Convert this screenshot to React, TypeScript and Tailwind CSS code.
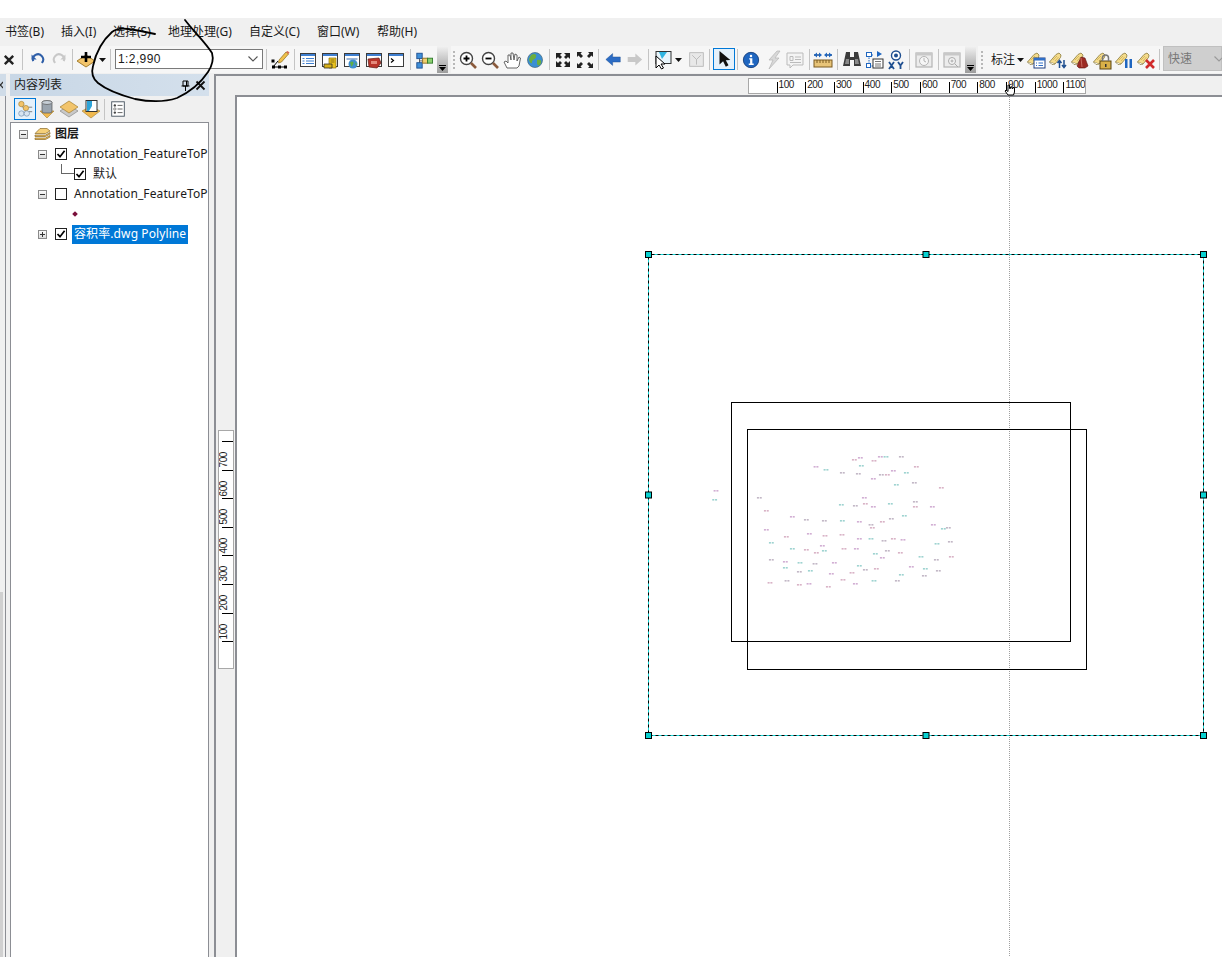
import type { ReactNode } from 'react';

const menus = [
  { label: '书签(B)', w: 'w-[56px]' },
  { label: '插入(I)', w: 'w-[52px]' },
  { label: '选择(S)', w: 'w-[55px]' },
  { label: '地理处理(G)', w: 'w-[81px]' },
  { label: '自定义(C)', w: 'w-[68px]' },
  { label: '窗口(W)', w: 'w-[60px]' },
  { label: '帮助(H)', w: 'w-[60px]' },
];

// label marks of the map, read off the picture
const marks = [
  [48,153],[44,180],[178,174],[199,213],[199,270],[214,309],[214,360],[210,429],[256,366],[256,384],[261,423],[259,291],
  [277,231],[277,327],[319,240],[319,330],[328,282],[300,369],[298,396],[298,435],[327,432],[331,393],[345,372],[349,339],
  [367,318],[373,333],[373,243],[375,288],[348,81],[378,90],[427,99],[463,60],[481,54],[484,78],[475,102],[522,63],
  [541,51],[558,51],[604,51],[649,81],[580,93],[619,99],[544,105],[562,105],[520,117],[589,135],[643,129],[724,144],
  [493,174],[424,195],[466,198],[496,192],[520,201],[571,192],[646,186],[646,201],[697,201],[613,228],[574,237],[547,246],
  [478,246],[427,243],[513,255],[517,264],[700,255],[730,267],[745,264],[426,285],[478,297],[513,297],[552,303],[580,297],
  [609,300],[711,312],[751,306],[432,327],[469,327],[526,342],[562,333],[601,339],[547,354],[663,351],[709,360],[754,351],
  [403,369],[478,378],[496,390],[529,387],[634,381],[676,387],[715,393],[456,399],[394,402],[604,405],[673,408],[429,420],
  [466,432],[522,423],[592,423],[385,441],
];
const markColors = ['#c79ac9', '#86c9c6', '#b3a6b8', '#d0a0b8'];

function Btn({ w, children }: { w: string; children?: ReactNode }) {
  return <div className={`flex h-[27px] shrink-0 items-center justify-center ${w}`}>{children}</div>;
}

function Sep({ w }: { w: string }) {
  return (
    <div className={`flex h-[27px] shrink-0 items-center justify-center ${w}`}>
      <div className="h-[21px] w-px shrink-0 bg-[#c4c4c4]" />
    </div>
  );
}

function Gripper({ w }: { w: string }) {
  return (
    <div className={`flex h-[27px] shrink-0 flex-col items-center justify-center gap-[2px] ${w}`}>
      {[0, 1, 2, 3, 4].map((i) => (
        <div key={i} className="h-[2px] w-[2px] bg-[#b8b8b8]" />
      ))}
    </div>
  );
}

function Overflow() {
  return (
    <div className="flex h-[27px] w-[11px] shrink-0 flex-col items-center justify-end bg-gradient-to-b from-[#f2f2f2] to-[#9c9c9c] pb-[2px]">
      <div className="mb-[1px] h-px w-[7px] bg-black" />
      <svg width="7" height="4" viewBox="0 0 7 4"><path d="M0 0h7L3.5 4z" fill="#000" /></svg>
    </div>
  );
}

function Caret() {
  return <svg width="7" height="4" viewBox="0 0 7 4"><path d="M0 0h7L3.5 4z" fill="#111" /></svg>;
}

function Ico({ children, w = 20, h = 20 }: { children: ReactNode; w?: number; h?: number }) {
  return (
    <svg width={w} height={h} viewBox="0 0 20 20" className="shrink-0">
      {children}
    </svg>
  );
}

function Win({ children }: { children?: ReactNode }) {
  return (
    <Ico>
      <rect x="2.5" y="3.5" width="15" height="13" fill="#fff" stroke="#3c3c3c" />
      <rect x="3" y="4" width="14" height="2" fill="#3f7fd0" />
      {children}
    </Ico>
  );
}

function Tag({ children }: { children?: ReactNode }) {
  return (
    <Ico>
      <path d="M1.5 12 8 4.5l3-1.5 2 2-.5 2.5L7 14z" fill="#f5dc8c" stroke="#8a7a3c" strokeWidth=".8" />
      <path d="M1.5 12l2.5 2.5L7 14" fill="#fff" stroke="#8a7a3c" strokeWidth=".8" />
      <path d="M5 10l4-4M7 11l3.5-4" stroke="#c9a94e" strokeWidth=".7" />
      {children}
    </Ico>
  );
}

function Layers() {
  return (
    <svg width="17" height="14" viewBox="0 0 17 14" className="shrink-0">
      <path d="M1 12.5h10.500l4.500-2.500v-1.500L11.500 11H1z" fill="#f0c060" stroke="#8a6a28" strokeWidth=".7" />
      <path d="M1 9.500h10.500l4.500-2.500v-1.500L11.500 8H1z" fill="#f0c060" stroke="#8a6a28" strokeWidth=".7" />
      <path d="M1 6.500h10.500L16 4 13 1.500H6z" fill="#f5cf78" stroke="#8a6a28" strokeWidth=".7" />
    </svg>
  );
}

function Toggle({ open }: { open: boolean }) {
  return (
    <div className="relative flex h-[9px] w-[9px] shrink-0 items-center justify-center border border-[#8a8a8a] bg-gradient-to-b from-[#fafafa] to-[#dcdcdc]">
      <div className="h-px w-[5px] bg-[#333]" />
      {!open && <div className="absolute h-[5px] w-px bg-[#333]" />}
    </div>
  );
}

function Check({ on = true }: { on?: boolean }) {
  return (
    <div className="flex h-[12px] w-[12px] shrink-0 items-center justify-center border border-[#222] bg-white">
      {on && (
        <svg width="10" height="10" viewBox="0 0 10 10">
          <path d="M1.5 5l2.5 2.7L8.6 1.8" fill="none" stroke="#000" strokeWidth="1.7" />
        </svg>
      )}
    </div>
  );
}

function TopRuler() {
  return (
    <div className="ml-[532px] mt-[2px] flex h-[16px] w-[338px] overflow-hidden border border-[#a8a8a8] bg-white pl-[27.5px]">
      {[100, 200, 300, 400, 500, 600, 700, 800, 900, 1000, 1100].map((n) => (
        <div key={n} className="flex w-[28.7px] shrink-0">
          <div className="mt-[3px] h-[11px] w-px shrink-0 bg-black" />
          <span className="ml-[1px] font-['Liberation_Sans',sans-serif] text-[10px] leading-[11px] tracking-[-0.4px] text-[#222]">{n}</span>
        </div>
      ))}
    </div>
  );
}

function SideRuler() {
  return (
    <div className="ml-[2px] mt-[335px] flex h-[239px] w-[16px] flex-col items-end overflow-hidden border border-[#a8a8a8] bg-white pt-[10px]">
      <div className="h-px w-[11px] shrink-0 bg-black" />
      {[700, 600, 500, 400, 300, 200, 100].map((n) => (
        <div key={n} className="flex h-[28.6px] w-[14px] shrink-0 flex-col items-start justify-end">
          <span className="mb-[2px] ml-[-1px] rotate-180 font-['Liberation_Sans',sans-serif] text-[10px] leading-[11px] tracking-[-0.4px] text-[#222] [writing-mode:vertical-rl]">{n}</span>
          <div className="h-px w-[11px] self-end bg-black" />
        </div>
      ))}
    </div>
  );
}

function Canvas() {
  // svg origin is the canvas corner, page position (237, 97)
  const ox = 237;
  const oy = 97;
  const handles = [
    [648.5, 254.5], [926, 254.5], [1203.5, 254.5],
    [648.5, 495], [1203.5, 495],
    [648.5, 735.5], [926, 735.5], [1203.5, 735.5],
  ];
  return (
    <svg className="h-full w-full" viewBox={`${ox} ${oy} 985 860`}>
      <line x1="1009.5" y1="97" x2="1009.5" y2="957" stroke="#a0a0a0" strokeDasharray="1 1" />
      <rect x="731.5" y="402.5" width="339" height="239" fill="none" stroke="#000" />
      <rect x="747.5" y="429.5" width="339" height="240" fill="none" stroke="#000" />
      <rect x="648.5" y="254.5" width="555" height="481" fill="none" stroke="#000" />
      <rect x="648.5" y="254.5" width="555" height="481" fill="none" stroke="#19d8d8" strokeDasharray="3 3" />
      {marks.map(([x, y], i) => (
        <g key={i} fill={markColors[i % 4]} opacity="0.8">
          <rect x={700 + x / 3 - 2.4} y={440 + y / 3 - 1} width="2" height="1.6" />
          <rect x={700 + x / 3 + 0.4} y={440 + y / 3 - 1} width="2" height="1.6" />
        </g>
      ))}
      {handles.map(([x, y], i) => (
        <rect key={i} x={x - 3} y={y - 3} width="6" height="6" fill="#08d0d0" stroke="#000" />
      ))}
    </svg>
  );
}

export default function App() {
  return (
    <div className="relative h-[957px] w-[1222px] overflow-hidden bg-white font-['Noto_Sans','Noto_Sans_CJK_SC',sans-serif] text-[12px] text-[#1a1a1a]">
      <div className="h-[18px] bg-white" />

      {/* menu */}
      <div className="flex h-[28px] items-center bg-[#f0f0f0] pl-[5px]">
        {menus.map((m) => (
          <div key={m.label} className={`shrink-0 whitespace-nowrap ${m.w}`}>
            {m.label}
          </div>
        ))}
      </div>

      {/* toolbars */}
      <div className="flex h-[28px] items-start bg-[#f0f0f0]">
        <div className="flex h-[27px] w-[437px] shrink-0 bg-[#f6f6f6]">
          <Btn w="w-[18px]">
            <Ico w={14} h={14}><path d="M4 4l12 12M16 4L4 16" stroke="#222" strokeWidth="3.4" /></Ico>
          </Btn>
          <Sep w="w-[9px]" />
          <Btn w="w-[20px]">
            <Ico w={17} h={17}><path d="M5 13a6 6 0 1 1 10-2" fill="none" stroke="#2f5fa8" strokeWidth="2.4" transform="matrix(-1 0 0 1 20 1)" /><path d="M3 4v6h6z" fill="#2f5fa8" /></Ico>
          </Btn>
          <Btn w="w-[24px]">
            <Ico w={17} h={17}><path d="M5 14a6 6 0 1 1 10-2" fill="none" stroke="#c8c8c8" strokeWidth="2.4" /><path d="M17 4v6h-6z" fill="#c8c8c8" /></Ico>
          </Btn>
          <Sep w="w-[2px]" />
          <Btn w="w-[25px]">
            <Ico>
              <path d="M1 11l9-6 9 6-9 6z" fill="#f2c46b" stroke="#a57f2e" />
              <path d="M10 2v10M5 7h10" stroke="#000" strokeWidth="2.6" />
            </Ico>
          </Btn>
          <Btn w="w-[8px]"><Caret /></Btn>
          <Sep w="w-[8px]" />
          <div className="ml-px mt-[3px] flex h-[20px] w-[148px] shrink-0 items-center justify-between border border-[#7a7a7a] bg-white pl-[2px] pr-[3px] font-['Liberation_Sans',sans-serif] tracking-[0.4px]">
            <span>1:2,990</span>
            <svg width="12" height="8" viewBox="0 0 12 8"><path d="M1.5 1.5L6 6l4.5-4.5" fill="none" stroke="#555" strokeWidth="1.1" /></svg>
          </div>
          <Sep w="w-[6px]" />
          <Btn w="w-[22px]">
            <Ico>
              <path d="M3 17h12M3 17l5-6" stroke="#000" />
              <path d="M2 15.5h3v3H2zM8 15.5h3v3H8zM14 15.5h3v3h-3zM1.5 9.5h3v3h-3z" fill="#000" />
              <path d="M9 10L16 2l2.5 2-7 8-3 1z" fill="#f0c04a" stroke="#8a6a20" strokeWidth=".7" />
              <path d="M16 2l2.5 2 1-1.5L17.5 1z" fill="#d86a50" />
            </Ico>
          </Btn>
          <Sep w="w-[6px]" />
          <Btn w="w-[22px]">
            <Win>
              <rect x="4.5" y="8" width="2" height="1" fill="#3f7fd0" /><rect x="8" y="8" width="8" height="1" fill="#3f7fd0" />
              <rect x="4.5" y="10.5" width="2" height="1" fill="#3f7fd0" /><rect x="8" y="10.5" width="8" height="1" fill="#3f7fd0" />
              <rect x="4.5" y="13" width="2" height="1" fill="#3f7fd0" /><rect x="8" y="13" width="8" height="1" fill="#3f7fd0" />
            </Win>
          </Btn>
          <Btn w="w-[22px]">
            <Win>
              <path d="M9 8h7v10H9z" fill="#e8c21e" stroke="#8a7010" strokeWidth=".7" />
              <path d="M4 14h8v4H4z" fill="#d8b018" stroke="#33302a" strokeWidth=".8" />
              <path d="M10.5 10h4M10.5 12h4" stroke="#8a7010" />
            </Win>
          </Btn>
          <Btn w="w-[22px]">
            <Win>
              <rect x="4.5" y="8" width="11" height="2" fill="#9db6d8" />
              <circle cx="11" cy="14" r="4.5" fill="#3f8fd0" />
              <path d="M8 12.5c2-2 4-1 3.5 1s-2 2.5-2 3.5M13 12l2 2-1 2z" fill="#5fae48" />
            </Win>
          </Btn>
          <Btn w="w-[22px]">
            <Win>
              <path d="M4 9l11-1 2 5-4 5-8-1z" fill="#b8342a" stroke="#5f1a14" strokeWidth=".7" />
              <path d="M7 11h6v3H7z" fill="#e48a7c" />
            </Win>
          </Btn>
          <Btn w="w-[22px]">
            <Win>
              <path d="M5 8.5l2.5 2L5 12.5" fill="none" stroke="#000" strokeWidth="1.2" />
            </Win>
          </Btn>
          <Sep w="w-[6px]" />
          <Btn w="w-[22px]">
            <Ico w={18} h={18}>
              <path d="M5 6v10M5 11h9" stroke="#555" />
              <rect x="2" y="2.5" width="6" height="6" fill="#3f8fd8" stroke="#1f4f90" />
              <rect x="2" y="13" width="6" height="6" fill="#3f8fd8" stroke="#1f4f90" />
              <rect x="8.5" y="8" width="5.5" height="5.5" fill="#f2d070" stroke="#8a6a20" />
              <rect x="14" y="8" width="5.5" height="5.5" fill="#8cd070" stroke="#2f7a2a" />
            </Ico>
          </Btn>
        </div>
        <Overflow />

        <div className="ml-[3px] flex h-[27px] shrink-0 bg-[#f6f6f6]">
          <Gripper w="w-[6px]" />
          <Btn w="w-[22px]">
            <Ico>
              <circle cx="8.5" cy="8.5" r="6" fill="#fff" stroke="#444" strokeWidth="1.4" />
              <path d="M13 13l5 5" stroke="#8a5a3c" strokeWidth="2.6" />
              <path d="M8.5 5.5v6M5.5 8.5h6" stroke="#000" strokeWidth="1.8" />
            </Ico>
          </Btn>
          <Btn w="w-[22px]">
            <Ico>
              <circle cx="8.5" cy="8.5" r="6" fill="#fff" stroke="#444" strokeWidth="1.4" />
              <path d="M13 13l5 5" stroke="#8a5a3c" strokeWidth="2.6" />
              <path d="M5.5 8.5h6" stroke="#000" strokeWidth="1.8" />
            </Ico>
          </Btn>
          <Btn w="w-[22px]">
            <Ico>
              <path d="M5 18l-3-6 2-1 2 2 0-8 2 0 1 5 0-7 2 0 1 7 1-6 2 1 0 6 2-4 1.5 1-1.5 8-2 2z" fill="#fff" stroke="#555" strokeWidth=".9" />
            </Ico>
          </Btn>
          <Btn w="w-[24px]">
            <Ico>
              <circle cx="10" cy="10" r="7.5" fill="#3a8fd4" stroke="#44667a" strokeWidth=".7" />
              <path d="M6 5c3-2 6-1 5 2s-4 2-4 5-3 0-3-3zM12 10c3-1 5 0 4 3s-3 3-4 1z" fill="#6cae3e" />
            </Ico>
          </Btn>
          <Sep w="w-[5px]" />
          <Btn w="w-[22px]">
            <Ico>
              <path d="M3 3h6l-2 2 2 2-2 2-2-2-2 2zM17 3h-6l2 2-2 2 2 2 2-2 2 2zM3 17h6l-2-2 2-2-2-2-2 2-2-2zM17 17h-6l2-2-2-2 2-2 2 2 2-2z" fill="#222" />
            </Ico>
          </Btn>
          <Btn w="w-[22px]">
            <Ico>
              <path d="M2 2h5L5.5 3.5 8 6 6 8 3.500 5.500 2 7zM18 2h-5l1.500 1.500L12 6l2 2 2.500-2.500L18 7zM2 18h5l-1.500-1.500L8 14l-2-2-2.500 2.500L2 13zM18 18h-5l1.500-1.500L12 14l2-2 2.500 2.500L18 13z" fill="#222" />
            </Ico>
          </Btn>
          <Sep w="w-[4px]" />
          <Btn w="w-[26px]">
            <Ico w={17} h={17}><path d="M1 10l8-7v4h9v6H9v4z" fill="#2c6cc4" stroke="#1f4f90" strokeWidth=".5" /></Ico>
          </Btn>
          <Btn w="w-[17px]">
            <Ico w={17} h={17}><path d="M19 10l-8-7v4H2v6h9v4z" fill="#c8c8c8" /></Ico>
          </Btn>
          <Sep w="w-[11px]" />
          <Btn w="w-[18px]">
            <Ico>
              <rect x="3" y="1.5" width="15" height="12" fill="#e8f4fa" stroke="#333" />
              <path d="M6 2h8L9 9z" fill="#2fb4e0" />
              <path d="M3 6l0 12 3-3 2.5 4 2-1-2.500-4 4 0z" fill="#fff" stroke="#000" />
            </Ico>
          </Btn>
          <Btn w="w-[12px]"><Caret /></Btn>
          <Btn w="w-[24px]">
            <Ico w={17} h={17}>
              <rect x="2" y="2" width="16" height="16" fill="#e8e8e8" stroke="#b4b4b4" />
              <path d="M5 5l5 5 5-5M10 10v6" fill="none" stroke="#b4b4b4" />
            </Ico>
          </Btn>
          <Sep w="w-[3px]" />
          <div className="ml-[2px] mt-[2px] flex h-[22px] w-[22px] shrink-0 items-center justify-center border border-[#0078d7] bg-[#e5f1fb]">
            <Ico w={18} h={18}>
              <path d="M5 1l0 15 4-3.500 3 6 3-1.500-3-5.500 5-.5z" fill="#111" />
            </Ico>
          </div>
          <Sep w="w-[4px]" />
          <Btn w="w-[24px]">
            <Ico w={18} h={18}>
              <circle cx="10" cy="10" r="8.5" fill="#1f66c0" stroke="#17407c" />
              <circle cx="10" cy="5.5" r="1.4" fill="#fff" />
              <path d="M8 8h3.500v6H13v1.500H7.500V14H9V9.500H8z" fill="#fff" />
            </Ico>
          </Btn>
          <Btn w="w-[22px]">
            <Ico><path d="M13 1L5 10h4l-4 9 10-11h-4l5-7z" fill="#d8d8d8" stroke="#b4b4b4" strokeWidth=".7" /></Ico>
          </Btn>
          <Btn w="w-[20px]">
            <Ico>
              <path d="M2 3h16v12h-10l-3 3v-3H2z" fill="#f4f4f4" stroke="#bbb" />
              <path d="M5 6.500h3v4H5zM10 7h6M10 9.500h6M5 12.500h11" fill="none" stroke="#bbb" />
            </Ico>
          </Btn>
          <Sep w="w-[8px]" />
          <Btn w="w-[20px]">
            <Ico>
              <path d="M1 5h5M14 5h5" stroke="#1f4f90" strokeWidth="1.6" />
              <path d="M1 5l3-2.500v5zM9 5L6 2.500v5zM11 5l3-2.500v5zM19 5l-3-2.500v5z" fill="#1f66c0" />
              <rect x="1" y="10" width="18" height="7" fill="#e8c478" stroke="#7a5a20" />
              <path d="M4 10v3M7 10v3M10 10v3M13 10v3M16 10v3" stroke="#7a5a20" />
            </Ico>
          </Btn>
          <Sep w="w-[8px]" />
          <Btn w="w-[22px]">
            <Ico>
              <path d="M4 2h4v5h4V2h4l3 14h-7V10H8v6H1z" fill="#3c3c3c" />
              <path d="M4 9h3v5H3zM13 9h3l1 5h-4z" fill="#8a8a8a" />
            </Ico>
          </Btn>
          <Btn w="w-[22px]">
            <Ico>
              <path d="M5 5h5M5 5v11M5 16h4" fill="none" stroke="#1f66c0" strokeDasharray="1.5 1" />
              <rect x="2.5" y="2.5" width="5" height="4" fill="#fff" stroke="#1f66c0" />
              <rect x="2.5" y="13.5" width="4" height="4" fill="#fff" stroke="#1f66c0" />
              <path d="M13 1l5 3-5 3z" fill="#1f66c0" />
              <rect x="9" y="9" width="10" height="9" fill="#fff" stroke="#333" />
              <path d="M11 11.500h6M11 14h6M11 16h6" stroke="#777" />
            </Ico>
          </Btn>
          <Btn w="w-[22px]">
            <Ico>
              <circle cx="10" cy="5.5" r="4.5" fill="#fff" stroke="#1f4f90" strokeWidth="1.4" />
              <circle cx="10" cy="5.5" r="2" fill="#1f4f90" />
              <path d="M3 12l5 7M8 12l-5 7M12 12l2.500 3.500v3.500M17 12l-2.500 3.500" fill="none" stroke="#1f4f90" strokeWidth="1.8" />
            </Ico>
          </Btn>
          <Sep w="w-[4px]" />
          <Btn w="w-[26px]">
            <Ico>
              <rect x="2" y="3" width="16" height="14" fill="#ececec" stroke="#b4b4b4" strokeWidth="1.2" />
              <rect x="2" y="3" width="16" height="2.5" fill="#c8c8c8" />
              <circle cx="10" cy="11" r="4.5" fill="#f6f6f6" stroke="#b4b4b4" />
              <path d="M10 8v3l2 1" fill="none" stroke="#b4b4b4" />
            </Ico>
          </Btn>
          <Sep w="w-[2px]" />
          <Btn w="w-[26px]">
            <Ico>
              <rect x="2" y="3" width="16" height="14" fill="#ececec" stroke="#b4b4b4" strokeWidth="1.2" />
              <rect x="2" y="3" width="16" height="2.5" fill="#c8c8c8" />
              <circle cx="10" cy="11" r="3.5" fill="#f6f6f6" stroke="#aaa" />
              <path d="M8.500 11h3M10 9.500v3M13 14l3 3" stroke="#aaa" />
            </Ico>
          </Btn>
          <Overflow />
        </div>

        <div className="ml-[2px] flex h-[27px] min-w-0 flex-1 bg-[#f6f6f6]">
          <Gripper w="w-[8px]" />
          <div className="ml-[4px] flex h-[27px] w-[25px] shrink-0 items-center whitespace-nowrap pl-[1px] text-[12px]">标注</div>
          <Btn w="w-[10px]"><Caret /></Btn>
          <Btn w="w-[22px]">
            <Tag>
              <rect x="8" y="8" width="11" height="10" fill="#fff" stroke="#1f3f80" />
              <rect x="8" y="8" width="11" height="2.5" fill="#2f6fc8" />
              <path d="M10 13h1M12.500 13H17M10 15.500h1M12.500 15.500H17" stroke="#2f6fc8" />
            </Tag>
          </Btn>
          <Btn w="w-[22px]">
            <Tag>
              <path d="M11.500 18v-7M9.500 13l2-2.500 2 2.500" fill="none" stroke="#1f4f90" strokeWidth="1.5" />
              <path d="M16 10v7M14 15l2 2.500 2-2.500" fill="none" stroke="#1f4f90" strokeWidth="1.5" />
            </Tag>
          </Btn>
          <Btn w="w-[22px]">
            <Tag>
              <path d="M11 7l4 1 3 8-3 2h-6l-2-2z" fill="#9c2a24" stroke="#5f1612" strokeWidth=".6" />
              <path d="M11 8l1 9" stroke="#c86a60" />
            </Tag>
          </Btn>
          <Btn w="w-[22px]">
            <Tag>
              <rect x="8" y="11" width="11" height="8" fill="#d8b048" stroke="#5a4410" />
              <path d="M10.500 11V8a3 3 0 0 1 6 0v3" fill="none" stroke="#777" strokeWidth="1.5" />
              <rect x="13" y="14" width="1.5" height="3" fill="#333" />
            </Tag>
          </Btn>
          <Btn w="w-[22px]">
            <Tag>
              <rect x="11" y="9" width="2.5" height="9" fill="#1f66c0" />
              <rect x="15.5" y="9" width="2.5" height="9" fill="#1f66c0" />
            </Tag>
          </Btn>
          <Btn w="w-[22px]">
            <Tag>
              <path d="M10 10l8 8M18 10l-8 8" stroke="#d02a2a" strokeWidth="2.6" />
            </Tag>
          </Btn>
          <Sep w="w-[4px]" />
          <div className="ml-[2px] flex h-[25px] flex-1 items-center justify-between border border-[#c0c0c0] bg-[#cfcfcf] pl-[4px] text-[#777]">
            <span>快速</span>
            <svg width="12" height="8" viewBox="0 0 12 8" className="mr-[-4px]"><path d="M1.500 1.500L6 6l4.500-4.500" fill="none" stroke="#999" strokeWidth="1.1" /></svg>
          </div>
        </div>
      </div>

      {/* body */}
      <div className="flex h-[883px] bg-[#f0f0f0]">
        {/* neighbouring docked panel, cut off at the edge */}
        <div className="flex w-[6px] shrink-0 flex-col">
          <div className="flex h-[22px] items-center overflow-hidden bg-[#d0dce8]">
            <svg width="3" height="8" viewBox="0 0 3 8" className="shrink-0"><path d="M-2 1l5 6M3 1l-5 6" stroke="#333" strokeWidth="1.2" /></svg>
          </div>
          <div className="flex-1 border-r border-[#8c8e94]">
            <div className="mt-[496px] h-[365px] w-[3px] bg-[#d0d0d0]" />
          </div>
        </div>

        {/* table of contents */}
        <div className="ml-[4px] flex w-[199px] shrink-0 flex-col">
          <div className="flex h-[22px] shrink-0 items-center justify-between bg-gradient-to-r from-[#c8d7e6] to-[#d4e0ec] pl-[4px] pr-[3px]">
            <span className="text-[12px]">内容列表</span>
            <div className="flex items-center gap-[4px]">
              <svg width="11" height="11" viewBox="0 0 11 11"><path d="M3 1h5v5H3zM1.500 6h8M5.500 6v5M6.500 1v5" fill="none" stroke="#000" /></svg>
              <svg width="11" height="11" viewBox="0 0 11 11"><path d="M1.500 1.500l8 8M9.500 1.500l-8 8" stroke="#111" strokeWidth="1.8" /></svg>
            </div>
          </div>
          <div className="flex h-[26px] shrink-0 items-center pl-[4px]">
            <div className="flex h-[22px] w-[22px] shrink-0 items-center justify-center border border-[#0078d7] bg-[#e5f1fb]">
              <Ico w={18} h={18}>
                <path d="M5 5l6 7M5 14h6M14 8h4M14 13h4" stroke="#777" />
                <circle cx="6" cy="4.5" r="3" fill="#f2c46b" stroke="#a57f2e" strokeWidth=".7" />
                <circle cx="11" cy="9" r="3" fill="#f2c46b" stroke="#a57f2e" strokeWidth=".7" />
                <circle cx="6" cy="15" r="3" fill="#d8e4f0" stroke="#6a88a8" strokeWidth=".7" />
                <circle cx="12" cy="15" r="3" fill="#d8e4f0" stroke="#6a88a8" strokeWidth=".7" />
              </Ico>
            </div>
            <Btn w="w-[22px]">
              <Ico>
                <path d="M3 12l7 7 7-7z" fill="#f0b84e" stroke="#a57f2e" strokeWidth=".6" />
                <rect x="5" y="2" width="10" height="12" rx="2" fill="#9aa4ae" stroke="#555" strokeWidth=".7" />
                <ellipse cx="10" cy="3.5" rx="5" ry="2" fill="#c6ced6" stroke="#555" strokeWidth=".7" />
              </Ico>
            </Btn>
            <Btn w="w-[22px]">
              <Ico>
                <path d="M1 12l9 6 9-6-9-6z" fill="#c8c8c8" stroke="#8a8a8a" strokeWidth=".7" />
                <path d="M1 8l9-6 9 6-9 6z" fill="#f2c46b" stroke="#a57f2e" strokeWidth=".7" />
              </Ico>
            </Btn>
            <Btn w="w-[22px]">
              <Ico>
                <path d="M1 12l9 7 9-7-9-5z" fill="#f0b84e" stroke="#a57f2e" strokeWidth=".6" />
                <rect x="5" y="1.5" width="11" height="11" fill="#fff" stroke="#333" />
                <path d="M6 2h5v5l-3 5H6z" fill="#2fa4d8" />
              </Ico>
            </Btn>
            <Sep w="w-[5px]" />
            <Btn w="w-[22px]">
              <Ico w={18} h={18}>
                <rect x="3" y="2" width="14" height="16" fill="#fff" stroke="#44505c" />
                <circle cx="6.5" cy="6" r="1.3" fill="#444" />
                <circle cx="6.5" cy="10" r="1.3" fill="#fff" stroke="#444" strokeWidth=".7" />
                <circle cx="6.5" cy="14" r="1.3" fill="#444" />
                <path d="M9.500 6H15M9.500 10H15M9.500 14H15" stroke="#555" />
              </Ico>
            </Btn>
          </div>

          <div className="flex-1 overflow-hidden border border-b-0 border-[#8c8e94] bg-white pt-px">
            <div className="flex h-[20px] items-center pl-[8px]">
              <Toggle open />
              <div className="ml-[6px]"><Layers /></div>
              <span className="ml-[4px] font-bold">图层</span>
            </div>
            <div className="flex h-[20px] items-center pl-[27px]">
              <Toggle open />
              <div className="ml-[8px]"><Check /></div>
              <span className="ml-[7px] whitespace-nowrap tracking-[0.1px]">Annotation_FeatureToP</span>
            </div>
            <div className="relative flex h-[20px] items-center pl-[63px]">
              <div className="absolute left-[50px] top-0 h-[10px] w-[13px] border-b border-l border-[#666]" />
              <Check />
              <span className="ml-[7px]">默认</span>
            </div>
            <div className="flex h-[20px] items-center pl-[27px]">
              <Toggle open />
              <div className="ml-[8px]"><Check on={false} /></div>
              <span className="ml-[7px] whitespace-nowrap tracking-[0.1px]">Annotation_FeatureToP</span>
            </div>
            <div className="flex h-[20px] items-center pl-[62px]">
              <div className="h-[4px] w-[4px] rotate-45 bg-[#7a0f3a]" />
            </div>
            <div className="flex h-[20px] items-center pl-[27px]">
              <Toggle open={false} />
              <div className="ml-[8px]"><Check /></div>
              <span className="ml-[5px] flex h-[19px] w-[116px] items-center whitespace-nowrap bg-[#0078d7] pl-[2px] tracking-[0.1px] text-white">容积率.dwg Polyline</span>
            </div>
          </div>
        </div>

        {/* map pane */}
        <div className="ml-[5px] flex min-w-0 flex-1 flex-col border-l-2 border-t-2 border-[#8c8e94]">
          <div className="h-[19px] shrink-0">
            <TopRuler />
          </div>
          <div className="flex min-h-0 flex-1">
            <div className="w-[19px] shrink-0">
              <SideRuler />
            </div>
            <div className="min-w-0 flex-1 border-l-2 border-t-2 border-[#8c8e94] bg-white">
              <Canvas />
            </div>
          </div>
        </div>
      </div>

      {/* pen scribble drawn over the screenshot */}
      <svg className="pointer-events-none absolute left-0 top-0" width="1222" height="957" viewBox="0 0 1222 957">
        <path
          d="M185 20C195 33 205 42 212 53C214 60 212 66 208 72C200 84 190 92 177 98C165 102 150 102 135 99C120 95 108 91 98 83C92 78 91 73 93 66C96 52 103 40 112 32C117 28 122 28 128 29C137 30 146 32 155 34"
          fill="none"
          stroke="#000"
          strokeWidth="1.8"
          strokeLinecap="round"
        />
        <path d="M1008 95l-3-4 1-1 2 1.500V85h1.500v3.500h1V87h1.500v1.500h1V87.500h1.500v4.500l-1 3z" fill="#fff" stroke="#000" strokeWidth="1" />
      </svg>
    </div>
  );
}
